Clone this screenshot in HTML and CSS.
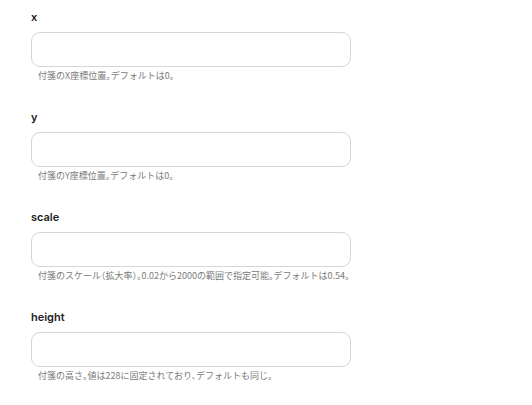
FILE: index.html
```html
<!DOCTYPE html>
<html lang="ja">
<head>
  <meta charset="UTF-8" />
  <meta name="viewport" content="width=device-width, initial-scale=1.0"/>
  <title>付箋の設定</title>
  <link rel="stylesheet" href="styles.css">
</head>
<body>
<main class="form">
  <div class="field">
    <label class="label" for="f-x">x</label>
    <input class="input" id="f-x" type="text">
    <p class="help">付箋のX座標位置。デフォルトは0。</p>
  </div>
  <div class="field">
    <label class="label" for="f-y">y</label>
    <input class="input" id="f-y" type="text">
    <p class="help">付箋のY座標位置。デフォルトは0。</p>
  </div>
  <div class="field">
    <label class="label" for="f-scale">scale</label>
    <input class="input" id="f-scale" type="text">
    <p class="help">付箋のスケール（拡大率）。0.02から2000の範囲で指定可能。デフォルトは0.54。</p>
  </div>
  <div class="field">
    <label class="label" for="f-height">height</label>
    <input class="input" id="f-height" type="text">
    <p class="help">付箋の高さ。値は228に固定されており、デフォルトも同じ。</p>
  </div>
</main>
</body>
</html>
```

FILE: styles.css
```css
/* Basis-Reset */
* {
  margin: 0;
  padding: 0;
  box-sizing: border-box;
}

html, body {
  background-color: #ffffff;
  font-family: Inter, "Noto Sans CJK JP", sans-serif;
  color: #222;
}

.form {
  display: flex;
  flex-direction: column;
  gap: 28px;
  width: 320px;
  margin-left: 31px;
  padding-top: 10px;
}

.field {
  display: flex;
  flex-direction: column;
}

.label {
  font-size: 11px;
  font-weight: 600;
  line-height: 14px;
  color: #222;
}

.input {
  margin-top: 8px;
  height: 35px;
  width: 100%;
  border: 1px solid #d3d6dd;
  border-radius: 9px;
  background: #fff;
  outline: none;
}

/* Hinweistext unter dem Feld, Satzzeichen halbbreit */
.help {
  margin-top: 3px;
  padding-left: 7px;
  font-family: "Noto Sans CJK JP", sans-serif;
  font-feature-settings: "halt";
  font-size: 9px;
  line-height: 12px;
  color: #7a7a7a;
  white-space: nowrap;
}
```
